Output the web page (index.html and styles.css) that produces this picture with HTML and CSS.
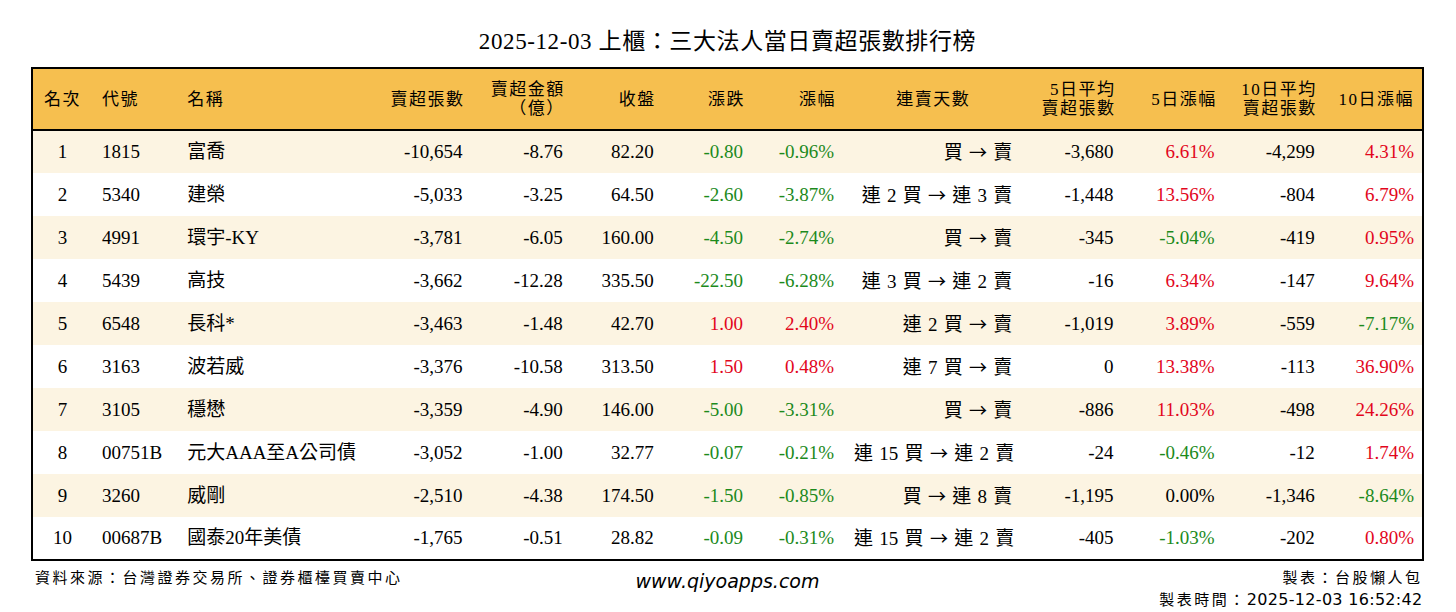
FILE: index.html
```html
<!DOCTYPE html>
<html lang="zh-Hant">
<head>
<meta charset="utf-8">
<title>2025-12-03 上櫃：三大法人當日賣超張數排行榜</title>
<link rel="stylesheet" href="styles.css">
</head>
<body>
<div class="page">
  <h1 class="title">2025-12-03 上櫃：三大法人當日賣超張數排行榜</h1>
  <table class="rank">
    <colgroup>
      <col class="w-rank"><col class="w-code"><col class="w-name"><col class="w-vol"><col class="w-amt">
      <col class="w-close"><col class="w-chg"><col class="w-pct"><col class="w-days"><col class="w-avg5">
      <col class="w-p5"><col class="w-avg10"><col class="w-p10">
    </colgroup>
    <thead>
      <tr>
        <th class="c">名次</th>
        <th class="l">代號</th>
        <th class="l">名稱</th>
        <th class="r">賣超張數</th>
        <th class="r">賣超金額<br>（億）</th>
        <th class="r">收盤</th>
        <th class="r">漲跌</th>
        <th class="r">漲幅</th>
        <th class="c">連賣天數</th>
        <th class="r">5日平均<br>賣超張數</th>
        <th class="r">5日漲幅</th>
        <th class="r">10日平均<br>賣超張數</th>
        <th class="r last">10日漲幅</th>
      </tr>
    </thead>
    <tbody>
      <tr><td class="c">1</td><td class="l">1815</td><td class="l">富喬</td><td class="r">-10,654</td><td class="r">-8.76</td><td class="r">82.20</td><td class="r dn">-0.80</td><td class="r dn">-0.96%</td><td class="r days">買 <span class="arr">→</span> 賣</td><td class="r">-3,680</td><td class="r up">6.61%</td><td class="r">-4,299</td><td class="r last up">4.31%</td></tr>
      <tr><td class="c">2</td><td class="l">5340</td><td class="l">建榮</td><td class="r">-5,033</td><td class="r">-3.25</td><td class="r">64.50</td><td class="r dn">-2.60</td><td class="r dn">-3.87%</td><td class="r days">連 2 買 <span class="arr">→</span> 連 3 賣</td><td class="r">-1,448</td><td class="r up">13.56%</td><td class="r">-804</td><td class="r last up">6.79%</td></tr>
      <tr><td class="c">3</td><td class="l">4991</td><td class="l">環宇-KY</td><td class="r">-3,781</td><td class="r">-6.05</td><td class="r">160.00</td><td class="r dn">-4.50</td><td class="r dn">-2.74%</td><td class="r days">買 <span class="arr">→</span> 賣</td><td class="r">-345</td><td class="r dn">-5.04%</td><td class="r">-419</td><td class="r last up">0.95%</td></tr>
      <tr><td class="c">4</td><td class="l">5439</td><td class="l">高技</td><td class="r">-3,662</td><td class="r">-12.28</td><td class="r">335.50</td><td class="r dn">-22.50</td><td class="r dn">-6.28%</td><td class="r days">連 3 買 <span class="arr">→</span> 連 2 賣</td><td class="r">-16</td><td class="r up">6.34%</td><td class="r">-147</td><td class="r last up">9.64%</td></tr>
      <tr><td class="c">5</td><td class="l">6548</td><td class="l">長科*</td><td class="r">-3,463</td><td class="r">-1.48</td><td class="r">42.70</td><td class="r up">1.00</td><td class="r up">2.40%</td><td class="r days">連 2 買 <span class="arr">→</span> 賣</td><td class="r">-1,019</td><td class="r up">3.89%</td><td class="r">-559</td><td class="r last dn">-7.17%</td></tr>
      <tr><td class="c">6</td><td class="l">3163</td><td class="l">波若威</td><td class="r">-3,376</td><td class="r">-10.58</td><td class="r">313.50</td><td class="r up">1.50</td><td class="r up">0.48%</td><td class="r days">連 7 買 <span class="arr">→</span> 賣</td><td class="r">0</td><td class="r up">13.38%</td><td class="r">-113</td><td class="r last up">36.90%</td></tr>
      <tr><td class="c">7</td><td class="l">3105</td><td class="l">穩懋</td><td class="r">-3,359</td><td class="r">-4.90</td><td class="r">146.00</td><td class="r dn">-5.00</td><td class="r dn">-3.31%</td><td class="r days">買 <span class="arr">→</span> 賣</td><td class="r">-886</td><td class="r up">11.03%</td><td class="r">-498</td><td class="r last up">24.26%</td></tr>
      <tr><td class="c">8</td><td class="l">00751B</td><td class="l">元大AAA至A公司債</td><td class="r">-3,052</td><td class="r">-1.00</td><td class="r">32.77</td><td class="r dn">-0.07</td><td class="r dn">-0.21%</td><td class="r days">連 15 買 <span class="arr">→</span> 連 2 賣</td><td class="r">-24</td><td class="r dn">-0.46%</td><td class="r">-12</td><td class="r last up">1.74%</td></tr>
      <tr><td class="c">9</td><td class="l">3260</td><td class="l">威剛</td><td class="r">-2,510</td><td class="r">-4.38</td><td class="r">174.50</td><td class="r dn">-1.50</td><td class="r dn">-0.85%</td><td class="r days">買 <span class="arr">→</span> 連 8 賣</td><td class="r">-1,195</td><td class="r">0.00%</td><td class="r">-1,346</td><td class="r last dn">-8.64%</td></tr>
      <tr><td class="c">10</td><td class="l">00687B</td><td class="l">國泰20年美債</td><td class="r">-1,765</td><td class="r">-0.51</td><td class="r">28.82</td><td class="r dn">-0.09</td><td class="r dn">-0.31%</td><td class="r days">連 15 買 <span class="arr">→</span> 連 2 賣</td><td class="r">-405</td><td class="r dn">-1.03%</td><td class="r">-202</td><td class="r last up">0.80%</td></tr>
    </tbody>
  </table>
  <footer class="foot">
    <div class="foot-left">資料來源：台灣證券交易所、證券櫃檯買賣中心</div>
    <div class="foot-mid">www.qiyoapps.com</div>
    <div class="foot-right">
      <div class="maker">製表：台股懶人包</div>
      <div class="time">製表時間：<span class="stamp">2025-12-03 16:52:42</span></div>
    </div>
  </footer>
</div>
</body>
</html>
```

FILE: styles.css
```css
html, body {
  margin: 0;
  padding: 0;
  background: #ffffff;
}

body {
  width: 1456px;
  height: 612px;
  overflow: hidden;
  font-family: "Liberation Serif", "Noto Sans CJK TC", serif;
  color: #000;
}

.page {
  padding: 27px 0 0 31px;
  width: 1393px;
}

.title {
  margin: 0 0 10px 0;
  height: 30px;
  line-height: 30px;
  font-size: 23px;
  font-weight: 400;
  text-align: center;
  letter-spacing: 0.6px;
}

.rank {
  width: 1393px;
  border-collapse: collapse;
  table-layout: fixed;
  border: 2px solid #000;
  font-size: 19px;
}

.w-rank { width: 60px; }
.w-code { width: 85px; }
.w-name { width: 195px; }
.w-vol { width: 100px; }
.w-amt { width: 100px; }
.w-close { width: 91px; }
.w-chg { width: 89px; }
.w-pct { width: 91px; }
.w-days { width: 178px; }
.w-avg5 { width: 101px; }
.w-p5 { width: 101px; }
.w-avg10 { width: 100px; }
.w-p10 { width: 98px; }

.rank thead tr {
  background: #f6bf4f;
  height: 62px;
  border-bottom: 2px solid #000;
}

.rank th {
  font-weight: 400;
  font-size: 17px;
  letter-spacing: 1.5px;
  line-height: 19px;
  padding: 0 10px;
  white-space: nowrap;
}

.rank th.r { padding-right: 8px; }

.rank tbody tr {
  height: 43px;
}

.rank tbody tr:nth-child(odd) {
  background: #fcf4e2;
}

.rank td {
  padding: 0 10px;
  white-space: nowrap;
  line-height: 22px;
}

.rank td.days {
  word-spacing: 1.5px;
}

.rank .last { padding-right: 8px; }

.arr {
  font-family: "Noto Sans CJK TC", sans-serif;
  font-size: 18px;
}

.c { text-align: center; }
.l { text-align: left; }
.r { text-align: right; }

.up { color: #e2061c; }
.dn { color: #1c8a1c; }

.foot {
  display: grid;
  grid-template-columns: 1fr auto 1fr;
  align-items: start;
  padding: 7px 4px 0 4px;
}

.foot-left {
  font-size: 15px;
  letter-spacing: 2.5px;
  line-height: 20px;
}

.foot-mid {
  font-family: "DejaVu Sans", sans-serif;
  font-style: italic;
  font-size: 19px;
  line-height: 20px;
  padding-top: 3px;
}

.foot-right {
  text-align: right;
  font-size: 15px;
  letter-spacing: 2.5px;
  line-height: 21px;
}

.foot-right .maker {
  margin-right: -2.5px;
}

.time {
  margin-right: -2.5px;
}

.stamp {
  font-family: "DejaVu Sans", sans-serif;
  font-size: 16px;
  letter-spacing: 0.3px;
}
```
